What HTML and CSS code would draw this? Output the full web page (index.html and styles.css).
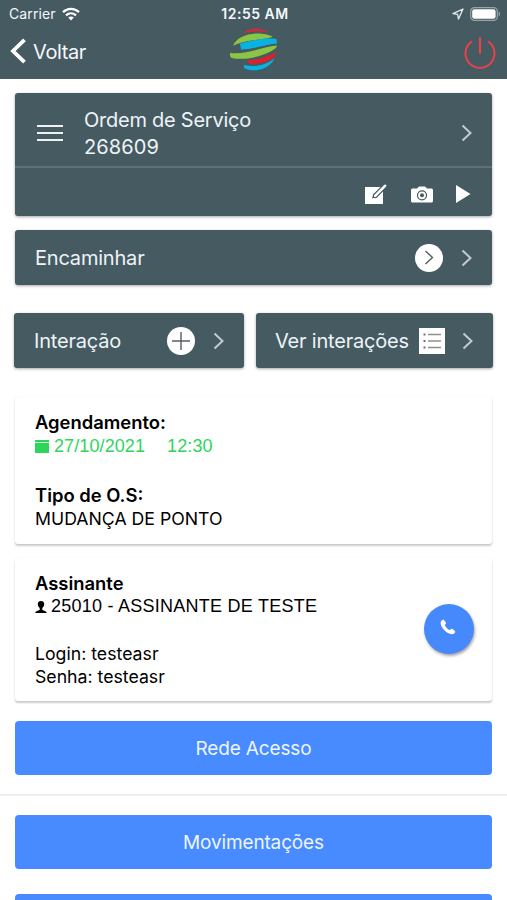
FILE: index.html
```html
<!DOCTYPE html>
<html lang="pt-BR">
<head>
    <meta charset="UTF-8">
    <meta name="viewport" content="width=device-width, initial-scale=1.0">
    <title>Ordem de Serviço</title>
    <link rel="stylesheet" href="styles.css">
</head>
<body>
    <header class="header">
        <div class="status-bar">
            <div class="status-left">
                <span class="carrier">Carrier</span>
                <svg class="wifi" width="18" height="14" viewBox="0 0 18 14" fill="none" stroke="#fff" stroke-width="2.3">
                    <path d="M1 5.2C5.6.8 12.4.8 17 5.2"/>
                    <path d="M4 8.4c2.9-2.7 7.1-2.7 10 0"/>
                    <path d="M9 13.5 6.2 10.6c1.6-1.5 4-1.5 5.6 0z" fill="#fff" stroke="none"/>
                </svg>
            </div>
            <span class="clock">12:55 AM</span>
            <div class="status-right">
                <svg width="12" height="12" viewBox="0 0 12 12" fill="none" stroke="#e8eef0" stroke-width="1.3" stroke-linejoin="round">
                    <path d="M11 1 1 5.6l4.6.8.9 4.6z"/>
                </svg>
                <svg width="31" height="14" viewBox="0 0 31 14">
                    <rect x=".7" y=".7" width="26.6" height="12.6" rx="3.6" fill="none" stroke="#98a4a9" stroke-width="1.2"/>
                    <rect x="2.2" y="2.2" width="23.4" height="9.6" rx="2.2" fill="#fff"/>
                    <path d="M28.6 4.6c2 .8 2 4 0 4.8z" fill="#98a4a9"/>
                </svg>
            </div>
        </div>
        <nav class="navbar">
            <a class="back">
                <svg width="17" height="26" viewBox="0 0 17 26" fill="none" stroke="#fff" stroke-width="3.8">
                    <path d="M14.500 1.800 3 13l11.500 11.200"/>
                </svg>
                <span>Voltar</span>
            </a>
            <svg class="logo" width="50" height="44" viewBox="0 0 50 44">
                <path d="M14 6.500C20-.5 33 0 40 6 31 3.500 22 4 14 6.500z" fill="#d5283a"/>
                <path d="M4 19C8 7 31 3 43.500 9.500 42 12.500 16 12 4 19z" fill="#8cc541"/>
                <path d="M11 16.500C22 13.500 35 10.500 47.500 12L48 16.500C38 17 24 22.500 12 22.500z" fill="#08b2e3"/>
                <path d="M1 26C18 28 32 20 48 18.500 48 24 22 35 2.500 31 1 30 1 28 1 26z" fill="#8cc541"/>
                <path d="M48 25C45 34 32 38 19 36.500V33C30 33.500 38 29 48 25z" fill="#df202c"/>
                <path d="M45.500 31.500C40 43 24 46 15 41V38C27 41 37 37.500 45.500 31.500z" fill="#08b2e3"/>
            </svg>
            <svg class="power" width="32" height="32" viewBox="0 0 32 32" fill="none" stroke="#ee4048" stroke-width="2" stroke-linecap="round">
                <path d="M7.300 4.800a14.500 14.500 0 1 0 17.400 0M16 1v15"/>
            </svg>
        </nav>
    </header>

    <main class="content">
        <!-- Ordem de serviço -->
        <section class="panel order">
            <div class="order-top">
                <svg width="26" height="16" viewBox="0 0 26 16" stroke="#f0f2f2" stroke-width="2">
                    <path d="M0 1h26M0 8h26M0 15h26"/>
                </svg>
                <div class="order-title">Ordem de Serviço<br><span class="order-number">268609</span></div>
                <svg class="chevron" viewBox="0 0 11 18"><path d="M1.500 1.500 9.500 9l-8 7.500"/></svg>
            </div>
            <div class="order-actions">
                <svg width="22" height="21" viewBox="0 0 22 21">
                    <path d="M0 3h18v17H0z" fill="#fff"/>
                    <path d="M20.500 1.500 10.500 11.500" stroke="#465a62" stroke-width="5" stroke-linecap="round"/>
                    <path d="M7 14.500 8.500 9.500l4 3.500z" fill="#465a62"/>
                    <path d="M20 1.800 10.200 11.800" stroke="#fff" stroke-width="2.600" stroke-linecap="round"/>
                </svg>
                <svg width="22" height="17" viewBox="0 0 22 17">
                    <path d="M1.500 2.500H6L8 .5h6l2 2h4.500q1.500 0 1.500 1.500v11q0 1.500-1.500 1.500h-19Q0 16.500 0 15V4Q0 2.500 1.500 2.500z" fill="#fff"/>
                    <circle cx="11" cy="9.300" r="4.500" fill="none" stroke="#465a62" stroke-width="1.200"/>
                    <circle cx="11" cy="9.300" r="2" fill="#465a62"/>
                </svg>
                <svg width="15" height="18" viewBox="0 0 15 18"><path d="M0 0v18l14.500-9z" fill="#fff"/></svg>
            </div>
        </section>

        <section class="panel row forward">
            <span class="row-label forward-label">Encaminhar</span>
            <span class="round">
                <svg width="10" height="15" viewBox="0 0 10 15" fill="none" stroke="#555d62" stroke-width="1.400"><path d="m1.500 1 7 6.500-7 6.500"/></svg>
            </span>
            <svg class="chevron" viewBox="0 0 11 18"><path d="M1.500 1.500 9.500 9l-8 7.500"/></svg>
        </section>

        <div class="interactions">
            <div class="panel row interaction">
                <span class="row-label">Interação</span>
                <span class="round">
                    <svg width="18" height="18" viewBox="0 0 18 18" stroke="#555d62" stroke-width="1.400"><path d="M9 0v18M0 9h18"/></svg>
                </span>
                <svg class="chevron" viewBox="0 0 11 18"><path d="M1.500 1.500 9.500 9l-8 7.500"/></svg>
            </div>
            <div class="panel row interaction-list">
                <span class="row-label list-label">Ver interações</span>
                <svg width="26" height="26" viewBox="0 0 26 26">
                    <path d="M0 0h26v26H0z" fill="#fff"/>
                    <path d="M9 6.500h13M9 13h13M9 19.500h13" stroke="#8d9092" stroke-width="1.300"/>
                    <path d="M4.500 6.500h2M4.500 13h2M4.500 19.500h2" stroke="#6c7174" stroke-width="2"/>
                </svg>
                <svg class="chevron" viewBox="0 0 11 18"><path d="M1.500 1.500 9.500 9l-8 7.500"/></svg>
            </div>
        </div>

        <!-- Agendamento -->
        <section class="card schedule">
            <h2>Agendamento:</h2>
            <p class="date">
                <svg width="14" height="13" viewBox="0 0 14 13"><path d="M0 0h14v2H0zM0 2.700h14V13H0z" fill="#2dd55b"/></svg>
                <span>27/10/2021</span>
                <span class="time">12:30</span>
            </p>
            <h2 class="type">Tipo de O.S:</h2>
            <p class="type-name">MUDANÇA DE PONTO</p>
        </section>

        <!-- Assinante -->
        <section class="card subscriber">
            <div>
                <h2>Assinante</h2>
                <p class="name">
                    <svg width="12" height="12" viewBox="0 0 12 12"><path d="M6 0C3.600 0 2.600 1.300 2.800 3.200c.1 1.800.9 2.900 1.900 3.800v1.700C4.500 9.700.5 9.500.3 12h11.400c-.2-2.500-4.200-2.300-4.400-3.300V7c1-.9 1.800-2 1.900-3.800C9.400 1.300 8.400 0 6 0z"/></svg>
                    <span>25010 - ASSINANTE DE TESTE</span>
                </p>
                <p class="login">Login: testeasr</p>
                <p class="password">Senha: testeasr</p>
            </div>
            <a class="call">
                <svg width="16" height="16" viewBox="0 0 16 16"><path d="M3.300.7C2 .8.500 2.200.6 4c.3 5 6 10.700 11.200 11.300 1.700.1 3.200-1.300 3.400-2.600.1-.8-2.800-2.900-3.600-2.900-.9.100-1.300 1.400-2.100 1.200C8 10.500 5.300 7.800 4.900 6.300c-.2-.8 1.100-1.200 1.100-2C6.100 3.400 4.100.6 3.300.7z" fill="#fff"/></svg>
            </a>
        </section>

        <button class="button access">Rede Acesso</button>
        <hr class="divider">
        <button class="button movements">Movimentações</button>
        <button class="button"></button>
    </main>
</body>
</html>
```
FILE: styles.css
```css
* {
    margin: 0;
    padding: 0;
    box-sizing: border-box;
}

body {
    height: 900px;
    overflow: hidden;
    background: #fff;
    color: #000;
    font-family: Inter, "Liberation Sans", Arial, sans-serif;
}

svg {
    display: block;
    flex: none;
}

.header {
    height: 79px;
    background: #465a62;
    color: #f4f8fb;
}

.status-bar {
    display: grid;
    grid-template-columns: 1fr auto 1fr;
    align-items: center;
    height: 27px;
    padding: 0 6px 0 9px;
    font-size: 14px;
}

.status-left,
.status-right {
    display: flex;
    align-items: center;
    gap: 6px;
}

.carrier {
    letter-spacing: 0.1px;
}

.status-right {
    justify-content: flex-end;
}

.clock {
    font-weight: 600;
    letter-spacing: 0.5px;
}

.navbar {
    display: grid;
    grid-template-columns: 1fr auto 1fr;
    align-items: center;
    height: 49px;
    padding: 0 11px 0 10px;
}

.back {
    display: flex;
    align-items: center;
    gap: 6px;
    font-size: 20px;
    letter-spacing: -0.4px;
}

.back svg {
    margin-top: -2px;
}

.logo {
    margin: -5px 0 0 1px;
}

.power {
    justify-self: end;
    margin-top: 3px;
}

.content {
    height: 821px;
    overflow: hidden;
    padding: 14px 15px 0;
}

.panel {
    background: #465a62;
    color: #edf4f7;
    border-radius: 3px;
    box-shadow: 0 1px 3px rgba(0, 0, 0, 0.35);
    font-size: 20px;
}

.order {
    height: 123px;
}

.order-top {
    display: flex;
    align-items: center;
    height: 75px;
    padding: 6px 20px 0 22px;
    border-bottom: 2px solid #5e7078;
}

.order-title {
    flex: 1;
    margin: 2px 0 0 21px;
    line-height: 27px;
    letter-spacing: -0.25px;
}

.order-number {
    letter-spacing: 0.1px;
}

.order-actions {
    display: flex;
    align-items: center;
    justify-content: flex-end;
    gap: 24px;
    height: 48px;
    padding: 4px 21px 0 0;
}

.order-actions svg:last-child {
    margin-left: -1px;
}

.chevron {
    width: 11px;
    height: 18px;
    fill: none;
    stroke: #c2cbd0;
    stroke-width: 2;
}

.row {
    display: flex;
    align-items: center;
    height: 55px;
    padding: 0 20px;
}

.row-label {
    flex: 1;
    white-space: nowrap;
    letter-spacing: -0.2px;
}

.round {
    display: flex;
    align-items: center;
    justify-content: center;
    width: 28px;
    height: 28px;
    margin-right: 18px;
    border-radius: 50%;
    background: #fff;
}

.forward {
    margin-top: 14px;
}

.interactions {
    display: flex;
    gap: 12px;
    margin: 28px -1px 0;
}

.interaction {
    width: 230px;
}

.interaction-list {
    flex: 1;
    padding-left: 19px;
}

.interaction-list .chevron {
    margin-left: 17px;
}

.card {
    border-radius: 3px;
    box-shadow: 0 2px 2px rgba(0, 0, 0, 0.2), 0 0 1px rgba(0, 0, 0, 0.12);
    padding: 14px 20px 0;
    font-size: 17.700px;
    line-height: 23.300px;
}

.card h2 {
    font-size: 18.400px;
    font-weight: 600;
}

.schedule {
    height: 147px;
    margin-top: 29px;
}

.date,
.name {
    display: flex;
    align-items: center;
    gap: 5px;
    font-family: "Liberation Sans", Arial, sans-serif;
    font-size: 18px;
    letter-spacing: 0.1px;
}

.date {
    padding-top: 1px;
    color: #2dd55b;
}

.time {
    margin-left: 17px;
}

.type {
    margin-top: 25px;
}

.subscriber {
    display: flex;
    justify-content: space-between;
    height: 143px;
    margin-top: 14px;
}

.name {
    gap: 4px;
    letter-spacing: 0.25px;
}

.login {
    margin-top: 23px;
}

.call {
    display: flex;
    align-items: center;
    justify-content: center;
    width: 50px;
    height: 50px;
    margin: 32px -2px 0 0;
    padding: 0 2px 4px 0;
    border-radius: 50%;
    background: #4589fc;
    box-shadow: 1px 2px 3px rgba(0, 0, 0, 0.35);
}

.button {
    display: block;
    width: 100%;
    height: 54px;
    border: none;
    border-radius: 4px;
    background: #488aff;
    color: #edf5ff;
    font-family: inherit;
    font-size: 19px;
    letter-spacing: -0.15px;
}

.access {
    margin-top: 20px;
}

.divider {
    height: 2px;
    margin: 19px -15px;
    border: none;
    background: #eee;
}

.movements {
    margin-bottom: 25px;
}
```
